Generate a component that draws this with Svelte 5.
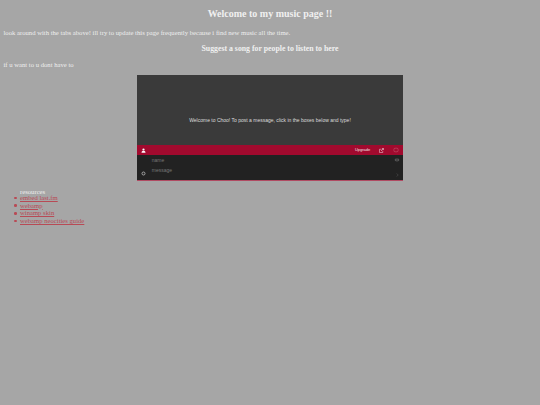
<script>
  const links = ['embed last.fm', 'webamp', 'winamp skin', 'webamp neocities guide'];
</script>

<main class="page">
  <h2>Welcome to my music page !!</h2>
  <p>look around with the tabs above! ill try to update this page frequently because i find new music all the time.</p>
  <h3>Suggest a song for people to listen to here</h3>
  <p>if u want to u dont have to</p>

  <section class="chat">
    <div class="messages">
      <span>Welcome to Choo! To post a message, click in the boxes below and type!</span>
    </div>
    <div class="bar">
      <svg class="user" viewBox="0 0 10 10" aria-hidden="true">
        <circle cx="5" cy="3" r="2.2" fill="#fff" />
        <path d="M1 9.5 C1 6.5 3 5.5 5 5.5 S9 6.5 9 9.5 Z" fill="#fff" />
      </svg>
      <span class="upgrade">Upgrade</span>
      <svg class="ext" viewBox="0 0 10 10" aria-hidden="true">
        <path d="M1 2.5 H5 M1 2.5 V9 H7.5 V5.5" fill="none" stroke="#f3dfe4" stroke-width="1" />
        <path d="M4 6 L8.5 1.5 M6 1 H9 V4" fill="none" stroke="#fff" stroke-width="1" />
      </svg>
      <svg class="ring" viewBox="0 0 10 10" aria-hidden="true">
        <rect x="1.5" y="2" width="7" height="6" rx="2" fill="none" stroke="#c4576f" stroke-width="1" />
      </svg>
    </div>
    <div class="form">
      <svg class="gear" viewBox="0 0 10 10" aria-hidden="true">
        <circle cx="5" cy="5" r="3" fill="none" stroke="#a5a5a5" stroke-width="2" />
      </svg>
      <div class="fields">
        <div class="name">name</div>
        <div class="message">message</div>
      </div>
      <div class="side">
        <svg class="eye" viewBox="0 0 10 6" aria-hidden="true">
          <ellipse cx="5" cy="3" rx="4" ry="2.4" fill="#555" />
          <circle cx="5" cy="3" r="1.1" fill="#2a2a2a" />
        </svg>
        <svg class="send" viewBox="0 0 6 8" aria-hidden="true">
          <path d="M1.5 1 L4.5 4 L1.5 7" fill="none" stroke="#555" stroke-width="1.2" />
        </svg>
      </div>
    </div>
  </section>

  <div class="resources">
    <div class="label">resources</div>
    <ul>
      {#each links as link}
        <li><a href="#top">{link}</a></li>
      {/each}
    </ul>
  </div>
</main>

<style>
  :global(body) {
    background: #a6a6a6;
  }

  .page {
    padding: 8px 3.5px 0;
    font-family: "Liberation Serif", "Times New Roman", serif;
    font-size: 6.67px;
    line-height: 7.6px;
    color: #eee;
  }

  h2 {
    margin: 0 0 8.5px;
    font-size: 10px;
    line-height: 12px;
    text-align: center;
    color: #f0f0f0;
  }

  h3 {
    margin: 8px 0;
    font-size: 7.8px;
    line-height: 9px;
    text-align: center;
    color: #f0f0f0;
  }

  p {
    margin: 0;
  }

  .chat {
    width: 266.5px;
    margin: 6.5px auto 0;
    border-bottom: 1px solid #b04a62;
    font-family: "Liberation Sans", Arial, sans-serif;
    background: #222;
  }

  .messages {
    height: 70px;
    padding-bottom: 22px;
    box-sizing: border-box;
    display: flex;
    align-items: flex-end;
    justify-content: center;
    background: #3a3a3a;
    font-size: 5px;
    line-height: 6px;
    color: #ddd;
  }

  .bar {
    height: 10px;
    padding: 0 4px 0 4px;
    display: flex;
    align-items: center;
    background: #a10a2e;
    color: #f3e3e7;
  }

  .user {
    width: 5px;
    height: 5px;
  }

  .upgrade {
    margin-left: auto;
    font-size: 4px;
  }

  .ext {
    width: 5px;
    height: 5px;
    margin-left: 9px;
  }

  .ring {
    width: 6px;
    height: 6px;
    margin-left: 9px;
  }

  .form {
    height: 25px;
    display: flex;
    font-size: 5px;
    color: #777;
  }

  .gear {
    width: 5px;
    height: 5px;
    margin: 16px 0 0 4px;
  }

  .fields {
    flex: 1;
    padding: 2px 0 0 6px;
    line-height: 6px;
  }

  .message {
    margin-top: 3.5px;
  }

  .side {
    display: flex;
    flex-direction: column;
    align-items: center;
    padding: 3px 3px 0 0;
  }

  .eye {
    width: 6px;
    height: 4px;
  }

  .send {
    width: 3px;
    height: 4px;
    margin-top: 11px;
  }

  .resources {
    margin: 6.5px 0 0 16.5px;
  }

  ul {
    margin: -1px 0 0 -6px;
    padding: 0;
    list-style: none;
  }

  li {
    display: flex;
    align-items: center;
    gap: 3.5px;
    line-height: 7.6px;
  }

  li::before {
    content: "";
    width: 2.5px;
    height: 2.5px;
    border-radius: 50%;
    background: #b84a55;
  }

  a {
    color: #b84a55;
  }
</style>
